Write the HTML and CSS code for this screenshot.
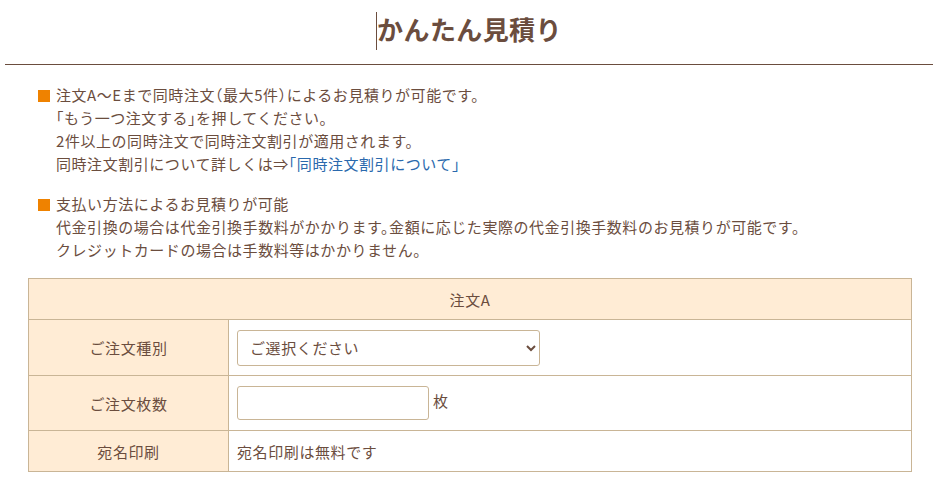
FILE: index.html
```html
<!DOCTYPE html>
<html>
<head>
    <title>かんたん見積り</title>
    <link rel="stylesheet" href="styles.css">
</head>
<body>
    <div class="page">
        <h1 class="title"><span class="caret"></span>かんたん見積り</h1>

        <div class="notes">
            <div class="note">
                <p class="note-head"><span class="mark"></span>注文A～Eまで同時注文（最大5件）によるお見積りが可能です。</p>
                <p>「もう一つ注文する」を押してください。</p>
                <p>2件以上の同時注文で同時注文割引が適用されます。</p>
                <p>同時注文割引について詳しくは⇒<a href="#">「同時注文割引について」</a></p>
            </div>
            <div class="note">
                <p class="note-head"><span class="mark"></span>支払い方法によるお見積りが可能</p>
                <p>代金引換の場合は代金引換手数料がかかります。金額に応じた実際の代金引換手数料のお見積りが可能です。</p>
                <p>クレジットカードの場合は手数料等はかかりません。</p>
            </div>
        </div>

        <table class="order">
            <tr class="row-head">
                <th colspan="2">注文A</th>
            </tr>
            <tr class="row-select">
                <th>ご注文種別</th>
                <td>
                    <select class="field-select">
                        <option>ご選択ください</option>
                    </select>
                </td>
            </tr>
            <tr class="row-input">
                <th>ご注文枚数</th>
                <td><input type="text" class="field-count"> 枚</td>
            </tr>
            <tr class="row-text">
                <th>宛名印刷</th>
                <td>宛名印刷は無料です</td>
            </tr>
        </table>
    </div>
</body>
</html>
```

FILE: styles.css
```css
body {
    margin: 0;
    font-family: "Noto Sans CJK JP", "Noto Sans", sans-serif;
    color: #6b4d3e;
    background: #fff;
}
.page {
    padding: 0 5px;
}
.title {
    margin: 0;
    padding-top: 8px;
    height: 56px;
    line-height: 41px;
    font-size: 26px;
    font-weight: bold;
    letter-spacing: 0.4px;
    text-align: center;
    border-bottom: 1px solid #6b4d3e;
}
.caret {
    display: inline-block;
    width: 1px;
    height: 38px;
    margin-right: 0;
    vertical-align: -10px;
    background: #6b4d3e;
}
.notes {
    padding: 18px 0 0 33px;
    font-size: 15px;
    line-height: 23px;
    letter-spacing: 0.55px;
    font-feature-settings: "halt";
}
.note {
    margin-bottom: 17px;
}
.note p {
    margin: 0;
    padding-left: 18px;
}
.note .note-head {
    padding-left: 0;
}
.mark {
    display: inline-block;
    width: 12px;
    height: 12px;
    margin-right: 6px;
    vertical-align: -1px;
    background: #ef8200;
}
.note a {
    color: #2a69ad;
    text-decoration: none;
}
.order {
    margin: 0 0 0 23px;
    width: 884px;
    border-collapse: collapse;
    font-size: 15px;
    letter-spacing: 0.6px;
}
.order th,
.order td {
    border: 1px solid #c9b596;
    padding: 0;
}
.order th {
    width: 199px;
    background: #ffecd5;
    font-weight: normal;
    text-align: center;
}
.order td {
    padding-left: 8px;
}
.row-head th {
    height: 40px;
}
.row-select th {
    height: 55px;
}
.row-input th {
    height: 54px;
}
.row-text th {
    height: 40px;
}
.field-select {
    width: 303px;
    height: 36px;
    padding: 0 8px;
    font-family: inherit;
    font-size: 15px;
    letter-spacing: 0.6px;
    color: #6b4d3e;
    background: #fff;
    border: 1px solid #c9b596;
    border-radius: 3px;
}
.field-count {
    width: 192px;
    height: 34px;
    box-sizing: border-box;
    border: 1px solid #c9b596;
    border-radius: 3px;
    vertical-align: middle;
}
```
